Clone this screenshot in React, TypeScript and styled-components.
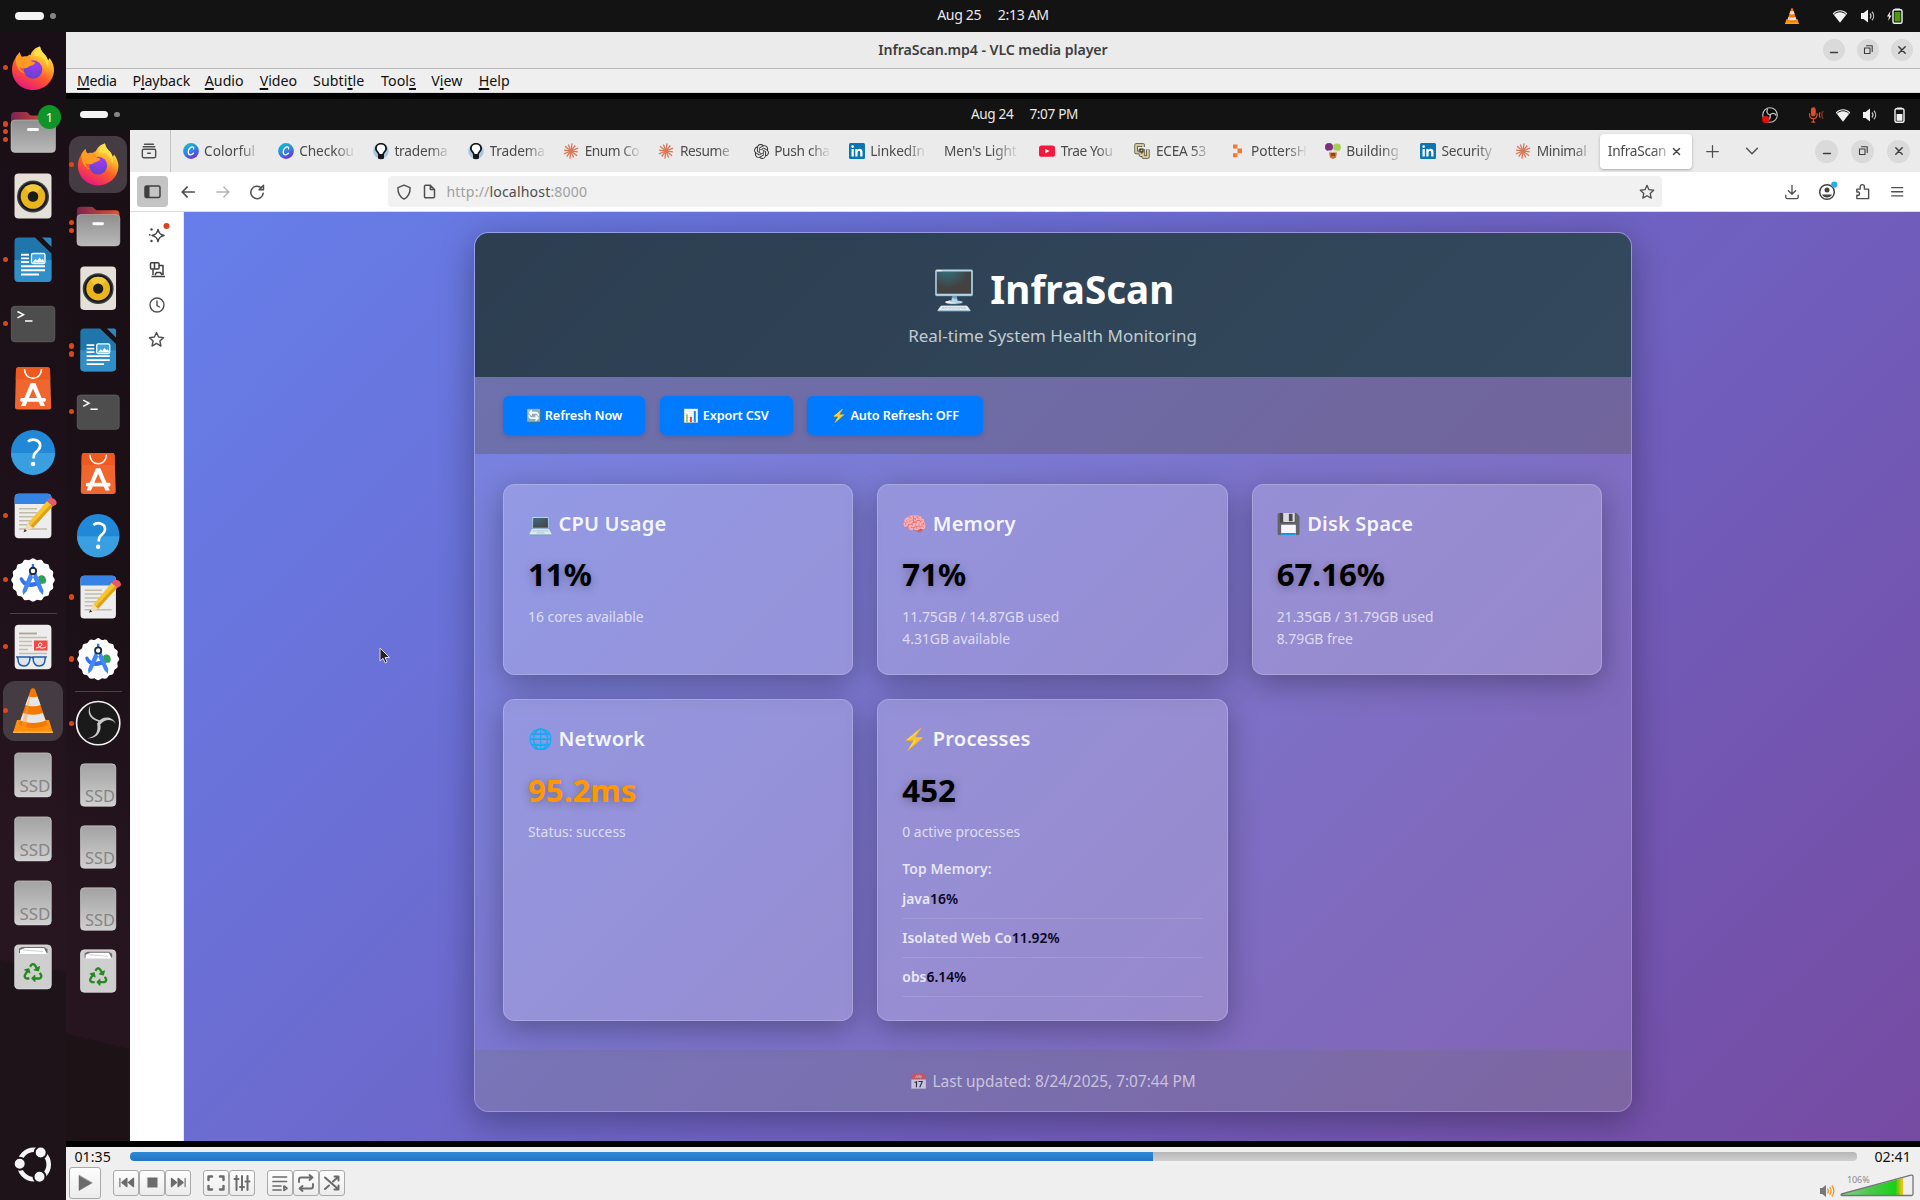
import React from "react";
import styled, { createGlobalStyle, css } from "styled-components";
import { SiOpenai } from "react-icons/si";
import { FaRecycle } from "react-icons/fa";

const UI = `"Noto Sans", "Open Sans", sans-serif`;

const Global = createGlobalStyle`
  *, *::before, *::after { box-sizing: border-box; }
  html, body { margin: 0; padding: 0; background: #000; }
  body { width: 1920px; height: 1200px; overflow: hidden; font-family: ${UI}; }
  svg { display: block; flex: none; overflow: visible; }
`;

/* ---------- desktop shell ---------- */

const Desktop = styled.div`
  width: 1920px;
  height: 1200px;
  display: grid;
  grid-template-rows: 32px 1168px;
  overflow: hidden;
`;

const TopBar = styled.header<{ $h: number; $left: number; $fs: number; $pad: number }>`
  height: ${(p) => p.$h}px;
  background: #131313;
  color: #e9e9e9;
  display: grid;
  grid-template-columns: 1fr auto 1fr;
  align-items: center;
  padding: 0 ${(p) => p.$pad}px 0 ${(p) => p.$left}px;
  font-size: ${(p) => p.$fs}px;
  letter-spacing: -0.35px;
`;

const Activities = styled.div<{ $s: number }>`
  display: flex;
  align-items: center;
  gap: ${(p) => 6 * p.$s}px;
  &::before {
    content: "";
    width: ${(p) => 29 * p.$s}px;
    height: ${(p) => 8 * p.$s}px;
    border-radius: 5px;
    background: #f4f4f4;
  }
  &::after {
    content: "";
    width: ${(p) => 6 * p.$s}px;
    height: ${(p) => 6 * p.$s}px;
    border-radius: 50%;
    background: #858585;
  }
`;

const Clock = styled.div<{ $shift: number; $gap: number }>`
  display: flex;
  gap: ${(p) => p.$gap}px;
  margin-right: ${(p) => p.$shift}px;
  padding-bottom: 2.4px;
  white-space: nowrap;
`;

const Tray = styled.div<{ $gap: number }>`
  display: flex;
  justify-content: flex-end;
  align-items: center;
  gap: ${(p) => p.$gap}px;
`;

const TrayGap = styled.span<{ $w: number }>`
  width: ${(p) => p.$w}px;
`;

const Below = styled.div`
  display: grid;
  grid-template-columns: 66px 1854px;
  min-height: 0;
`;

const Dock = styled.nav<{ $pad: number; $inner?: boolean }>`
  display: flex;
  flex-direction: column;
  align-items: center;
  padding-top: ${(p) => p.$pad}px;
  background: ${(p) =>
    p.$inner
      ? "linear-gradient(194deg, #1a0f15 0%, #1c1017 50%, #26151f 78%, #26151f 89.4%, #1d1216 89.6%)"
      : "linear-gradient(190deg, #1a0f16 0%, #1e1119 45%, #27151f 70%, #27151f 79.5%, #1e1318 79.8%)"};
`;

const DockItem = styled.div<{ $h: number; $active?: boolean }>`
  position: relative;
  height: ${(p) => p.$h}px;
  width: 100%;
  display: flex;
  align-items: center;
  justify-content: center;
  ${(p) =>
    p.$active &&
    css`
      &::before {
        content: "";
        position: absolute;
        inset: 2px 3px;
        border-radius: 12px;
        background: #453b42;
      }
    `}
  svg {
    position: relative;
  }
`;

const Dots = styled.div`
  position: absolute;
  z-index: 1;
  left: 3px;
  top: 0;
  bottom: 0;
  display: flex;
  flex-direction: column;
  justify-content: center;
  gap: 2.6px;
`;

const Dot = styled.i`
  width: 5.4px;
  height: 5.4px;
  border-radius: 50%;
  background: #d9481c;
`;

const DockRule = styled.hr`
  width: 47px;
  height: 1px;
  margin: 1px 0;
  border: 0;
  background: #4a4046;
`;

const DockEnd = styled.div`
  margin-top: auto;
  padding-bottom: 16px;
`;

const Badge = styled.span`
  position: absolute;
  z-index: 2;
  left: 38px;
  top: 5px;
  width: 23px;
  height: 24px;
  border-radius: 50%;
  background: #0f9428;
  color: #fff;
  font-size: 13px;
  line-height: 24px;
  text-align: center;
`;

/* ---------- player window ---------- */

const Player = styled.main`
  display: grid;
  grid-template-rows: 36px 25px 6px 1042px 6px 53px;
  background: #000;
  min-width: 0;
`;

const TitleBar = styled.div`
  display: grid;
  grid-template-columns: 1fr auto 1fr;
  align-items: center;
  background: #ebebeb;
  padding: 0 7px;
`;

const Title = styled.h1`
  margin: 0;
  padding-bottom: 1px;
  font-size: 14.2px;
  font-weight: 600;
  letter-spacing: -0.08px;
  color: #3d3d3d;
`;

const WinButtons = styled.div<{ $gap: number; $d: number }>`
  display: flex;
  justify-content: flex-end;
  align-items: center;
  gap: ${(p) => p.$gap}px;
  span {
    width: ${(p) => p.$d}px;
    height: ${(p) => p.$d}px;
    border-radius: 50%;
    background: #dadada;
    display: grid;
    place-items: center;
  }
`;

const MenuBar = styled.div`
  display: flex;
  gap: 15.4px;
  padding-left: 11px;
  border-top: 1px solid #b9b9b9;
  border-bottom: 1px solid #d8d8d8;
  background: #efefef;
  color: #111;
  font-size: 14.2px;
  line-height: 23px;
  white-space: nowrap;
`;

const MenuEntry = styled.span<{ $w: number; $ls: number }>`
  width: ${(p) => p.$w}px;
  letter-spacing: ${(p) => p.$ls}px;
  u {
    text-underline-offset: 2px;
    text-decoration-thickness: 2px;
    text-decoration-skip-ink: none;
  }
`;

const Controls = styled.footer`
  background: #efefef;
  display: grid;
  grid-template-rows: 18px 35px;
`;

const SeekRow = styled.div`
  display: grid;
  grid-template-columns: 64px 1727px 1fr;
  align-items: center;
  font-size: 14.2px;
  color: #111;
`;

const Time = styled.span<{ $pad: number }>`
  padding-left: ${(p) => p.$pad}px;
  padding-top: 2px;
  line-height: 16px;
  letter-spacing: 0;
`;

const Seek = styled.div`
  height: 9px;
  border-radius: 4px;
  background: linear-gradient(#b6b6b6, #d0d0d0);
  overflow: hidden;
`;

const SeekFill = styled.div`
  height: 100%;
  border-radius: 4px 0 0 4px;
  background: linear-gradient(#2f8ad8, #2476c6);
`;

const ButtonRow = styled.div`
  display: flex;
  align-items: center;
  padding-left: 3px;
`;

const ButtonGroup = styled.div`
  display: flex;
  margin-right: 12px;
`;

const PlayerButton = styled.button<{ $big?: boolean }>`
  width: ${(p) => (p.$big ? 32 : 26)}px;
  height: ${(p) => (p.$big ? 32 : 26)}px;
  padding: 0;
  border: 1px solid #a9a9a9;
  border-radius: 3px;
  background: linear-gradient(#fdfdfd, #ececec);
  display: grid;
  place-items: center;
`;

const Volume = styled.div`
  margin-left: auto;
  margin-right: 5px;
  display: flex;
  align-items: flex-end;
  gap: 5px;
  height: 30px;
`;

const Wedge = styled.div`
  position: relative;
  width: 75px;
  height: 26px;
  span {
    position: absolute;
    left: 7px;
    top: 2px;
    font-size: 9px;
    line-height: 12px;
    color: #8a8a8a;
    letter-spacing: -0.1px;
  }
`;

/* ---------- recorded desktop ---------- */

const Recording = styled.section`
  display: grid;
  grid-template-rows: 31px 1011px;
  min-width: 0;
  overflow: hidden;
  position: relative;
`;

const RecBelow = styled.div`
  display: grid;
  grid-template-columns: 64px 1790px;
  min-height: 0;
`;

const Browser = styled.div`
  display: grid;
  grid-template-rows: 42px 40px 929px;
  background: #fff;
  min-width: 0;
`;

const TabStrip = styled.div`
  display: flex;
  align-items: center;
  background: #ebebeb;
  color: #4b4b4b;
  font-size: 13.7px;
  padding-right: 10px;
`;

const Archive = styled.div`
  width: 41px;
  height: 42px;
  border-right: 1px solid #c2c2c2;
  display: grid;
  place-items: center;
  padding-right: 3px;
`;

const Tab = styled.div`
  width: 95.2px;
  padding-left: 11.5px;
  display: flex;
  align-items: center;
  gap: 5.5px;
`;

const TabLabel = styled.span<{ $ls: number; $wide?: boolean }>`
  width: ${(p) => (p.$wide ? 78 : 58)}px;
  padding-bottom: 1px;
  white-space: nowrap;
  letter-spacing: ${(p) => p.$ls}px;
  mask-image: linear-gradient(to right, #000 62%, transparent 98%);
`;

const ActiveTab = styled.div`
  width: 92px;
  height: 35px;
  margin-left: 1px;
  padding-left: 8px;
  border-radius: 4px;
  background: #fff;
  box-shadow: 0 1px 3px rgba(0, 0, 0, 0.28);
  display: flex;
  align-items: center;
  gap: 3px;
`;

const ActiveLabel = styled.span`
  width: 60px;
  padding-bottom: 1px;
  white-space: nowrap;
  letter-spacing: -0.3px;
  mask-image: linear-gradient(to right, #000 75%, rgba(0, 0, 0, 0.3) 100%);
`;

const StripIcons = styled.div`
  display: flex;
  align-items: center;
  gap: 25px;
  margin-left: 13px;
  margin-right: auto;
`;

const NavBar = styled.div`
  display: flex;
  align-items: center;
  background: #fff;
  border-bottom: 1px solid #dcdce6;
  padding: 0 15px 0 7px;
`;

const SidebarToggle = styled.div`
  width: 31px;
  height: 31px;
  border-radius: 4px;
  background: #c4c4c4;
  display: grid;
  place-items: center;
`;

const NavIcons = styled.div`
  display: flex;
  align-items: center;
  gap: 18.5px;
  margin-left: 12px;
`;

const UrlBar = styled.div`
  margin-left: 123px;
  width: 1274px;
  height: 31px;
  border-radius: 4px;
  background: #f1f1f1;
  display: flex;
  align-items: center;
  padding: 0 7px 0 7.5px;
`;

const UrlText = styled.span`
  margin-left: 10px;
  margin-right: auto;
  padding-bottom: 1px;
  font-size: 14.1px;
  letter-spacing: 0.16px;
  color: #a0a0a0;
  b {
    font-weight: 400;
    color: #4d4d4d;
  }
`;

const NavRight = styled.div`
  margin-left: auto;
  display: flex;
  align-items: center;
  gap: 18px;
`;

const Content = styled.div`
  display: grid;
  grid-template-columns: 54px 1736px;
  min-height: 0;
`;

const SideRail = styled.aside`
  background: #fff;
  border-right: 1px solid #e6e6ee;
  display: flex;
  flex-direction: column;
  align-items: center;
  gap: 17px;
  padding-top: 14px;
`;

/* ---------- InfraScan page ---------- */

const Page = styled.div`
  background: linear-gradient(135deg, #667eea 0%, #764ba2 100%);
  padding-top: 19.5px;
  color: #fff;
  overflow: hidden;
`;

const Panel = styled.div`
  width: 1158px;
  height: 880.5px;
  margin-left: 289.5px;
  border: 1px solid rgba(255, 255, 255, 0.22);
  border-radius: 14.5px;
  background: rgba(255, 255, 255, 0.1);
  box-shadow: 0 8px 34px rgba(0, 0, 0, 0.33);
  overflow: hidden;
  display: grid;
  grid-template-rows: 144.5px 77px 1fr 61px;
`;

const Hero = styled.header`
  background: linear-gradient(135deg, #2c3e50, #34495e);
  text-align: center;
  padding-top: 26.2px;
  h2 {
    margin: 0 0 0.6px;
    font-size: 38.6px;
    line-height: 61.8px;
    font-weight: 700;
  }
  p {
    margin: 0;
    font-size: 17px;
    line-height: 27px;
    color: #c2cbd1;
  }
`;

const Actions = styled.div`
  background: rgba(96, 88, 100, 0.42);
  display: flex;
  align-items: center;
  gap: 14.6px;
  padding-left: 28.6px;
`;

const Action = styled.button<{ $w: number }>`
  width: ${(p) => p.$w}px;
  height: 38.6px;
  padding: 0;
  border: 0;
  border-radius: 6px;
  background: #007bff;
  color: #fff;
  font: 600 12.7px/1 ${UI};
  letter-spacing: -0.12px;
  white-space: nowrap;
  box-shadow: 0 2px 5px rgba(0, 60, 160, 0.25);
`;

const Cards = styled.div`
  display: grid;
  grid-template-columns: repeat(3, 1fr);
  grid-template-rows: 191.2px 322.3px;
  gap: 24.2px;
  padding: 29.5px 28.6px 0;
`;

const Card = styled.article`
  border: 1px solid rgba(255, 255, 255, 0.2);
  border-radius: 11.6px;
  background: rgba(255, 255, 255, 0.2);
  box-shadow: 0 8px 31px rgba(0, 0, 0, 0.3);
  padding: 24.1px 23.9px;
`;

const CardTitle = styled.h3`
  margin: 0 0 11.6px;
  font-size: 20.1px;
  line-height: 29.1px;
  font-weight: 600;
  letter-spacing: 0.15px;
  color: rgba(255, 255, 255, 0.92);
`;

const Metric = styled.div<{ $c?: string }>`
  margin-bottom: 6.2px;
  font-size: 31.2px;
  line-height: 49.4px;
  font-weight: 700;
  color: ${(p) => p.$c ?? "#000"};
  text-shadow: 0 2px 10px rgba(0, 0, 0, 0.3);
`;

const Detail = styled.p`
  margin: 0;
  font-size: 13.9px;
  line-height: 22.2px;
  color: rgba(255, 255, 255, 0.7);
`;

const TopMemory = styled.p`
  margin: 14.5px 0 0;
  font-size: 13.9px;
  line-height: 22.2px;
  font-weight: 600;
  letter-spacing: 0.1px;
  color: rgba(255, 255, 255, 0.78);
`;

const Proc = styled.div`
  font-size: 13.9px;
  line-height: 22.9px;
  padding: 7.6px 0 7.4px;
  border-bottom: 1px solid rgba(255, 255, 255, 0.12);
  font-weight: 600;
  color: rgba(255, 255, 255, 0.82);
  b {
    font-weight: 600;
    color: #08041c;
  }
`;

const Updated = styled.footer`
  background: rgba(110, 110, 110, 0.25);
  text-align: center;
  padding-top: 20px;
  font-size: 15.4px;
  line-height: 24.6px;
  color: rgba(255, 255, 255, 0.6);
`;

const Emoji = styled.span<{ $gap?: number }>`
  font-family: "Noto Color Emoji", ${UI};
  margin-right: ${(p) => p.$gap ?? 0}px;
`;

const Pointer = styled.div`
  position: absolute;
  left: 313px;
  top: 548px;
`;

/* ---------- dock icons, 48 unit grid ---------- */

type P = { s: number };

const Svg48 = ({ s, children }: P & { children: React.ReactNode }) => (
  <svg width={48 * s} height={48 * s} viewBox="0 0 48 48">{children}</svg>
);

const Firefox = ({ s }: P) => (
  <Svg48 s={s}>
    <defs>
      <linearGradient id="ffx" x1=".8" y1="0" x2=".3" y2="1">
        <stop offset="0" stopColor="#fff44f" />
        <stop offset=".35" stopColor="#ffb02a" />
        <stop offset=".6" stopColor="#ff5a2c" />
        <stop offset="1" stopColor="#e8157f" />
      </linearGradient>
      <radialGradient id="ffg" cx=".6" cy=".2" r=".9">
        <stop offset="0" stopColor="#a33af0" />
        <stop offset="1" stopColor="#5a45c9" />
      </radialGradient>
    </defs>
    <path fill="url(#ffx)" d="M6 15c1-3 3-5 5-7 0 2 .6 3.400 1.800 4.800 1.500-.6 3.800-.8 5.200-.4 2-1 3.200-3 3.300-1C23 7 26 3.500 31 2.500c.5 4 3 6 5.500 9 1.500 1.800 2.200 3.600 2.500 5l1.600-2.600c3 4 4.700 8.600 4.400 13.100C44.300 38 35 46 24 46 12 46 3 37 3 25.500c0-4 1-7.500 3-10.500z" />
    <circle cx="24" cy="25.500" r="9.300" fill="url(#ffg)" />
    <path fill="#ff9a24" d="M7 13c1.500-1.400 3-3 4-4.500 0 2 .6 3.400 1.800 4.800 1.500-.6 3.800-.8 5.200-.4l3.300-2c0 3-.8 5 .7 6 2 1 4 .8 4 2-.3 1.500-3 2.600-5 3-1.500.3-2 1.600-3.500 2-3 1-5-.5-7-.4 1.500 3 3.500 5 6.500 6-6-.5-11-6-10-16.500z" />
    <path fill="#ffe04a" d="M25 12c.6-5 3.500-8.500 6-9.500.5 4 3 6 5.500 9 3 4 3.200 8 2.500 12-1-4-2.500-7-5.500-9.500-2-1.600-5-2-8.500-2z" />
  </Svg48>
);

const Files = ({ s }: P) => (
  <Svg48 s={s}>
    <defs>
      <linearGradient id="fback"><stop offset="0" stopColor="#7b2450" /><stop offset="1" stopColor="#e4572e" /></linearGradient>
      <linearGradient id="ffront" x1="0" y1="0" x2="0" y2="1"><stop offset="0" stopColor="#8f8f8f" /><stop offset="1" stopColor="#b9b9b9" /></linearGradient>
    </defs>
    <path fill="url(#fback)" d="M2 8a4 4 0 0 1 4-4h11c2.500 0 3 3.500 6 3.500h19a4 4 0 0 1 4 4V20H2z" />
    <rect x="2" y="12" width="44.500" height="32.500" rx="4" fill="url(#ffront)" stroke="#c8c8c8" strokeWidth=".5" />
    <rect x="18" y="20" width="12" height="3" rx="1.500" fill="#fff" />
  </Svg48>
);

const Speaker = ({ s }: P) => (
  <Svg48 s={s}>
    <rect x="5.500" y="1.500" width="37" height="45" rx="4" fill="#e6e1d8" />
    <circle cx="24" cy="24.500" r="16" fill="#3a3f45" />
    <circle cx="24" cy="24.500" r="14.500" fill="#17191c" />
    <circle cx="24" cy="24.500" r="12.300" fill="#e9b41c" />
    <path d="M24 24.500 15.500 15.700a12.300 12.300 0 0 1 17 0z" fill="#f5d24a" opacity=".7" />
    <circle cx="24" cy="24.500" r="5.300" fill="#1c1c1c" />
  </Svg48>
);

const Writer = ({ s }: P) => (
  <Svg48 s={s}>
    <path fill="#1f76ac" d="M9.500 1.500H26l16.500 16V42a4 4 0 0 1-4 4h-29a4 4 0 0 1-4-4V5.500a4 4 0 0 1 4-4z" />
    <path fill="#3798cf" d="M5.500 24H42.500V42a4 4 0 0 1-4 4h-29a4 4 0 0 1-4-4z" opacity=".75" />
    <path fill="#2d86bd" d="M33 1.500h7.500a2 2 0 0 1 2 2V11z" />
    <g fill="#fff">
      <path d="M12 17.800h8v1.900h-8zM12 21.400h8v1.900h-8zM12 25h8v1.900h-8zM12 29.300h24v1.900H12zM12 33.300h24v1.900H12zM12 37.500h18v1.900H12z" />
      <rect x="22.500" y="17.500" width="13.500" height="10" rx="1.500" fill="#3fa3dc" stroke="#fff" strokeWidth="1.300" />
      <path d="m23.500 26.500 3-3.500 2 1.500 2-3 2 2.500 1.500-1 1.500 3.500z" />
    </g>
  </Svg48>
);

const Terminal = ({ s }: P) => (
  <Svg48 s={s}>
    <rect x="2.300" y="6.300" width="43.500" height="35.500" rx="3.500" fill="#4d4d4d" stroke="#676767" strokeWidth=".7" />
    <path d="m8.500 11.500 6 3.200-6 3.200M16 21h7.500" fill="none" stroke="#fff" strokeWidth="1.500" />
  </Svg48>
);

const AppCenter = ({ s }: P) => (
  <Svg48 s={s}>
    <path fill="#f1662f" d="M9.500 3.200h29a2.500 2.500 0 0 1 2.500 2.300L42.200 43a2.500 2.500 0 0 1-2.500 2.500H8.500A2.500 2.500 0 0 1 6 43L7 5.500a2.500 2.500 0 0 1 2.500-2.300z" />
    <path fill="#ec5a20" d="M9.500 3.200h29a2.500 2.500 0 0 1 2.500 2.300l.3 10H6.700L7 5.500a2.500 2.500 0 0 1 2.500-2.300z" />
    <path d="M15.500 5c0 5.500 3.500 9.300 8.500 9.300S32.500 10.500 32.500 5" fill="none" stroke="#fff" strokeWidth="1.500" />
    <path fillRule="evenodd" fill="#fff" d="M21.700 19h4.600L36 42h-4.500L24 24.500 16.500 42H12z" />
    <rect x="11.300" y="34" width="25.400" height="3.700" rx="1.200" fill="#fff" />
  </Svg48>
);

const Help = ({ s }: P) => (
  <Svg48 s={s}>
    <circle cx="24" cy="24" r="22" fill="#2088d6" />
    <path d="M2 25h44a22 22 0 0 1-44 0z" fill="#3a9fe0" />
    <path d="M19 13.500c2-1.800 5-2.400 8-1.400 5 1.700 5.300 6.800 1.800 10.300-3 2.600-4.200 3.600-4.200 8.200" fill="none" stroke="#fff" strokeWidth="2.700" />
    <circle cx="24" cy="36" r="2.300" fill="#fff" />
  </Svg48>
);

const Editor = ({ s }: P) => (
  <Svg48 s={s}>
    <rect x="5.700" y="1.700" width="36.700" height="44.500" rx="4" fill="#ededed" />
    <path d="M5.700 12V5.700a4 4 0 0 1 4-4h28.700a4 4 0 0 1 4 4V12z" fill="#3584e4" />
    <path d="M10 16.800h18M10 20.800h18M10 24.800h16M10 28.800h12M10 32.800h8M10 37h28" stroke="#c4bcab" strokeWidth="1.600" />
    <path d="m19 31.500 19-22.500 5.500 5-19.500 22-8.500 3z" fill="#f7c52c" />
    <path d="m21.500 34 20-21.500 2 2-19.500 21.500z" fill="#dfa019" />
    <path d="m19 31.500 5 4.500-8.500 3.700z" fill="#efdcb8" />
    <path d="m14.500 40.200 1.300-3.200 2 1.900z" fill="#333" />
    <path d="m38 9 2-2.300c2-1.700 5.500-.5 7 2 .8 1.500.8 2.800 0 3.800l-3 2z" fill="#e8596a" />
  </Svg48>
);

const scallop = Array.from({ length: 97 }, (_, i) => {
  const a = (i / 96) * Math.PI * 2;
  const r = 21 + 0.8 * Math.cos(a * 16);
  return `${24 + r * Math.cos(a)},${24 + r * Math.sin(a)}`;
}).join(" ");

const Studio = ({ s }: P) => (
  <Svg48 s={s}>
    <polygon points={scallop} fill="#fff" />
    <path d="M29 21c2-2.500 5.500-2.500 7 0 1.500 2.300 1.300 4.500 0 6.500l-5 .5z" fill="#2fa24f" />
    <path d="M10.500 22.500c1-1.600 3-1.500 3.500 0 1.500 3 5 4.500 9 4l6-1.500 1.800 3.500c-8 4.500-18 3-20.300-6z" fill="#3573e8" />
    <path d="M21 16 13.500 34.500l.5 4.500 3.500-3.500L25.500 18zM27 16l7.500 18.500-.5 4.500-3.500-3.500L22.500 18z" fill="#4285f4" />
    <path d="M22.800 8h2.400v5h-2.400z" fill="#3573e8" />
    <circle cx="24" cy="15" r="3.200" fill="#fff" stroke="#1c2b33" strokeWidth="1.900" />
  </Svg48>
);

const DocViewer = ({ s }: P) => (
  <Svg48 s={s}>
    <rect x="5.700" y="1.700" width="36.700" height="44.500" rx="4" fill="#ededed" />
    <path d="M10 10.500h18" stroke="#b3a78f" strokeWidth="1.900" />
    <path d="M10 14.500h28M10 18.500h13M10 22.500h13M10 26.500h9M10 30.500h28" stroke="#c4bcab" strokeWidth="1.700" />
    <rect x="25" y="17.500" width="13.500" height="10" fill="#f04a44" />
    <path d="M27 25c4-.5 7-3 5.500-4.500s-4 .5-2.500 3 4.500 1.500 7 .5" fill="none" stroke="#fff" strokeWidth="1" />
    <g fill="rgba(190,215,240,.35)" stroke="#1f5ba8" strokeWidth="1.500">
      <path d="M8 34h13c0 5-1 9-6 9s-6-4-6-7zM24 34h13l-1 2c0 3-1 7-6 7s-6-4-6-9z" />
      <path d="M21 35c1-1 2-1 3 0" fill="none" />
    </g>
  </Svg48>
);

const Cone = ({ s }: P) => (
  <Svg48 s={s}>
    <path d="M8 33h32l4 13H4z" fill="#ff8f0c" />
    <path d="M4 44.500h40V46H4z" fill="#ffb347" />
    <path d="M22 2c.6-1 3.400-1 4 0l12 35c-3 5.500-25 5.500-28 0z" fill="#f57900" />
    <path d="M19.600 9.500c2.500 1 6.300 1 8.800 0l3.200 8.500c-4 1.800-11.200 1.800-15.200 0zM14.200 26c5 2.300 14.600 2.300 19.600 0l2.800 7.500c-6 3.300-19.200 3.300-25.200 0z" fill="#e6e6e6" />
    <path d="M22 2 13 36c-1.500 2 1 4 4 4.700z" fill="#ffa13d" opacity=".45" />
  </Svg48>
);

const Ssd = ({ s }: P) => (
  <Svg48 s={s}>
    <defs><linearGradient id="ssdg" x1="0" y1="0" x2="0" y2="1"><stop offset="0" stopColor="#a2a2a2" /><stop offset="1" stopColor="#d0d0d0" /></linearGradient></defs>
    <rect x="5.700" y="1.900" width="36.600" height="44" rx="4" fill="url(#ssdg)" stroke="#dcdcdc" strokeWidth=".6" />
    <text x="10.500" y="41" fontFamily={UI} fontSize="16" textLength="31" lengthAdjust="spacingAndGlyphs" fill="#858585">SSD</text>
  </Svg48>
);

const Trash = ({ s }: P) => (
  <Svg48 s={s}>
    <rect x="5.700" y="1.900" width="36.600" height="44" rx="4" fill="#cfcfcf" stroke="#e2e2e2" strokeWidth=".7" />
    <path d="M10 10V5.500L13 4h22l3.500 2V10z" fill="#6f6f6f" />
    <path d="M11 11V7l5-2h19l3 6z" fill="#fff" />
    <path d="m14 7 20 1.500" stroke="#bbb" strokeWidth=".7" />
    <FaRecycle x="14.500" y="20" size={19} color="#26891f" />
  </Svg48>
);

const Obs = ({ s }: P) => (
  <Svg48 s={s}>
    <circle cx="24" cy="24" r="22.400" fill="#1b1a1b" stroke="#f2f2f2" strokeWidth="1.700" />
    <g fill="#c9c9c9">
      <path d="M24.500 22.500c-9-2.500-13-9-8.500-17-2 8 1 13 9.500 15.500l1 4z" />
      <path d="M24 22.500c5-6 14-6.500 18.500 2-5.500-5.500-11-4.500-16 .5l-3 .5z" />
      <path d="M23 23.500l3 1c2.500 8-4 16-13 15 8-1.500 11.500-6 10-15z" />
    </g>
  </Svg48>
);

const UbuntuLogo = () => (
  <svg width="40" height="40" viewBox="0 0 40 40">
    <circle cx="21" cy="20.500" r="14.700" fill="none" stroke="#f5f5f5" strokeWidth="4.600" />
    <g fill="#f5f5f5" stroke="#1e1318" strokeWidth="2">
      <circle cx="27.700" cy="8.500" r="6" />
      <circle cx="6.700" cy="19.700" r="6" />
      <circle cx="26.500" cy="32.700" r="6" />
    </g>
  </svg>
);

/* ---------- symbolic icons ---------- */

const Wifi = () => (
  <svg width="16" height="16" viewBox="0 0 16 16">
    <path d="M.8 5.500C4.800 1.200 11.200 1.200 15.200 5.500L8 14.800z" fill="#f2f2f2" />
    <path d="M2.200 6.200C5.500 3 10.500 3 13.800 6.200" stroke="#131313" strokeWidth="1" fill="none" />
  </svg>
);

const Sound = () => (
  <svg width="16" height="16" viewBox="0 0 16 16">
    <path d="M1 5h2.500L8 1.500v13L3.500 11H1z" fill="#f2f2f2" />
    <path d="M10 5.500c1.200 1.500 1.200 3.500 0 5M12 3.800c2.200 2.400 2.200 6 0 8.400" stroke="#bdbdbd" strokeWidth="1.300" fill="none" />
  </svg>
);

const Battery = ({ charging }: { charging?: boolean }) => (
  <svg width="16" height="18" viewBox="0 0 16 18">
    {charging && <path d="M3.500 4 0 9.500h2L1.200 14 4.500 8.500h-2z" fill="#f2f2f2" />}
    <path d="M8 1.500h5v1.700H8z" fill="#f2f2f2" />
    <rect x="6" y="2.800" width="9" height="13.400" rx="1.500" fill="none" stroke="#f2f2f2" strokeWidth="1.400" />
    <rect x="7.600" y={charging ? 5 : 8} width="5.800" height={charging ? 9.500 : 6.800} fill={charging ? "#4e9a06" : "#f2f2f2"} />
  </svg>
);

const Mic = () => (
  <svg width="16" height="18" viewBox="0 0 18 18">
    <g stroke="#dd4f27" fill="none" strokeWidth="1.400">
      <rect x="4" y="1" width="4" height="9" rx="2" fill="#dd4f27" />
      <path d="M1.800 7v2c0 5.300 8.400 5.300 8.400 0V7M6 13v4M3.800 17h4.400M13.500 6c-1 2-1 4 0 6" />
      <path d="M17 4.500c-2 3-2 6 0 9" opacity=".6" />
    </g>
  </svg>
);

const ObsTray = () => (
  <svg width="16" height="18" viewBox="0 0 16 18">
    <circle cx="8" cy="9" r="7.300" fill="#0b0b0b" stroke="#c4c4c4" strokeWidth="1.100" />
    <g fill="none" stroke="#c4c4c4" strokeWidth="1.300" strokeLinecap="round">
      <path d="M8 9C5 8 4.300 5.500 5.500 3.500M8 9c2-2.200 4.500-2 6 0M8 9c.8 2.500-.5 5-3 5.300" />
    </g>
    <circle cx="3.800" cy="13.500" r="3.600" fill="#e80c0c" />
  </svg>
);

const Line = ({ d, w = 18, sw = 1.5, c = "#4f4f4f", fill = "none" }: { d: string; w?: number; sw?: number; c?: string; fill?: string }) => (
  <svg width={w} height={w} viewBox="0 0 18 18" fill={fill} stroke={c} strokeWidth={sw} strokeLinejoin="round" strokeLinecap="round">
    <path d={d} />
  </svg>
);

const WinIcons = ({ gap, d }: { gap: number; d: number }) => (
  <WinButtons $gap={gap} $d={d}>
    <span><Line d="M5.500 11.500h7" sw={1.300} c="#3d3d3d" /></span>
    <span><Line d="M5.500 7h5.500v5.500H5.500zM7.500 4.800h5.700v5.700" sw={1.100} c="#3d3d3d" /></span>
    <span><Line d="m5.800 5.800 6.400 6.400m0-6.400-6.400 6.400" sw={1.500} c="#3d3d3d" /></span>
  </WinButtons>
);

const starD = "M9 1.500l2.200 4.900 5.300.6-3.900 3.600 1.100 5.300L9 13.200l-4.700 2.700 1.100-5.300L1.500 7l5.300-.6z";

/* ---------- favicons ---------- */

const Fav = ({ children }: { children: React.ReactNode }) => (
  <svg width="16" height="16" viewBox="0 0 16 16">{children}</svg>
);

const Canva = () => (
  <Fav>
    <defs><linearGradient id="cnv" x1=".2" y1="0" x2=".7" y2="1"><stop offset="0" stopColor="#12c0cc" /><stop offset=".5" stopColor="#2f86dd" /><stop offset="1" stopColor="#6f2be0" /></linearGradient></defs>
    <circle cx="8" cy="8" r="7.900" fill="url(#cnv)" />
    <path d="M10.500 6c.6-1.300-.2-2.400-1.600-2.100C6.500 4.400 5 7.500 5.200 9.600c.3 2.600 3 3 5.300.6" fill="none" stroke="#fff" strokeWidth="1.300" strokeLinecap="round" />
  </Fav>
);

const Bulb = () => (
  <Fav>
    <circle cx="8" cy="8" r="7.800" fill="#a5c9e4" />
    <path d="M8 0c4 0 6 2.500 6 5.500S11 9.500 11 12v3.500c-1.500 1-4.500 1-6 0V12C5 9.500 2 8.500 2 5.500S4 0 8 0z" fill="#16181b" />
    <path d="M8 1.600c2.700 0 4.200 1.700 4.200 3.800S9.800 8.500 9.300 11H6.700C6.200 8.500 3.800 7.500 3.800 5.400S5.300 1.600 8 1.600z" fill="#fff" />
  </Fav>
);

const Burst = () => (
  <Fav>
    {Array.from({ length: 12 }, (_, i) => (
      <path key={i} d={`M8 8V${i % 2 ? 1 : 0.3}`} transform={`rotate(${i * 30 + 8} 8 8)`} stroke="#d97757" strokeWidth="1.300" />
    ))}
  </Fav>
);

const LinkedIn = () => (
  <Fav>
    <rect x="0" y="0" width="16" height="16" rx="1.500" fill="#0a76b4" />
    <path d="M2.500 6h2.300v7.500H2.500zM6.300 6h2.200v1c1.200-1.900 5-1.700 5 1.800v4.700h-2.300V9.500c0-2-2.600-1.900-2.600 0v4H6.300z" fill="#fff" />
    <circle cx="3.650" cy="3.600" r="1.300" fill="#fff" />
  </Fav>
);

const YouTube = () => (
  <Fav>
    <rect x="0" y="2.400" width="16" height="11.400" rx="2.600" fill="#f8173c" />
    <path d="M6.300 5.700v4.800l4.200-2.400z" fill="#fff" />
  </Fav>
);

const Buffs = () => (
  <Fav>
    <g fill="none" strokeLinejoin="round">
      <path d="M9 4V2H2.200v7.500H6M6.500 6v6H9.500M9.300 6v8h4.500V6.500" stroke="#4a4330" strokeWidth="3.600" />
      <path d="M9 4V2H2.200v7.500H6M6.500 6v6H9.500M9.300 6v8h4.500V6.500" stroke="#d2c8a0" strokeWidth="2.200" />
    </g>
    <path d="M5.500 5.500h4v4h-4z" fill="#1b1b1b" />
    <path d="M6.500 6.500h2v2h-2z" fill="#cfb87c" />
  </Fav>
);

const Pixels = () => (
  <Fav>
    <path d="M3 1.500h4.500v4H3zM7.500 5.500h4.500v4.800H7.500zM3 10.300h4.500v4H3z" fill="#f37a33" />
  </Fav>
);

const Sprout = () => (
  <Fav>
    <circle cx="4" cy="4" r="4" fill="#7b2f7e" />
    <circle cx="12" cy="4.300" r="3.900" fill="#a6cf57" />
    <path d="M2.500 7.500h11l-2 2h-7z" fill="#e8e0e6" />
    <path d="M4 9.500h8l-1 5-3 1.500-3-1.500z" fill="#c8742f" />
    <path d="M6 10h4v3H6z" fill="#8c4a1e" />
  </Fav>
);

const Knot = () => <SiOpenai size={15} color="#333" />;

const tabs: { icon?: React.ReactNode; label: string; ls: number }[] = [
  { icon: <Canva />, label: "Colorful", ls: 0 },
  { icon: <Canva />, label: "Checkou", ls: -0.1 },
  { icon: <Bulb />, label: "tradema", ls: -0.2 },
  { icon: <Bulb />, label: "Tradema", ls: -0.2 },
  { icon: <Burst />, label: "Enum Co", ls: -0.5 },
  { icon: <Burst />, label: "Resume", ls: -0.4 },
  { icon: <Knot />, label: "Push cha", ls: -0.3 },
  { icon: <LinkedIn />, label: "LinkedIn", ls: -0.15 },
  { label: "Men's Light", ls: -0.1 },
  { icon: <YouTube />, label: "Trae You", ls: -0.4 },
  { icon: <Buffs />, label: "ECEA 53", ls: -0.25 },
  { icon: <Pixels />, label: "PottersH", ls: -0.1 },
  { icon: <Sprout />, label: "Building", ls: -0.1 },
  { icon: <LinkedIn />, label: "Security", ls: -0.15 },
  { icon: <Burst />, label: "Minimal", ls: -0.3 },
];

type Entry = { icon: React.FC<P>; dots?: number; active?: boolean; badge?: string };

const outerDock: (Entry | null)[] = [
  { icon: Firefox, dots: 1 },
  { icon: Files, dots: 3, badge: "1" },
  { icon: Speaker },
  { icon: Writer, dots: 1 },
  { icon: Terminal, dots: 1 },
  { icon: AppCenter },
  { icon: Help },
  { icon: Editor, dots: 1 },
  { icon: Studio, dots: 1 },
  null,
  { icon: DocViewer, dots: 1 },
  { icon: Cone, dots: 1, active: true },
  { icon: Ssd },
  { icon: Ssd },
  { icon: Ssd },
  { icon: Trash },
];

const innerDock: (Entry | null)[] = [
  { icon: Firefox, dots: 1, active: true },
  { icon: Files, dots: 2 },
  { icon: Speaker },
  { icon: Writer, dots: 2 },
  { icon: Terminal, dots: 1 },
  { icon: AppCenter },
  { icon: Help },
  { icon: Editor, dots: 1 },
  { icon: Studio, dots: 1 },
  null,
  { icon: Obs, dots: 1 },
  { icon: Ssd },
  { icon: Ssd },
  { icon: Ssd },
  { icon: Trash },
];

const DockList = ({ items, h, s }: { items: (Entry | null)[]; h: number; s: number }) => (
  <>
    {items.map((it, i) =>
      it === null ? (
        <DockRule key={i} />
      ) : (
        <DockItem key={i} $h={h} $active={it.active}>
          {it.dots && <Dots>{Array.from({ length: it.dots }, (_, n) => <Dot key={n} />)}</Dots>}
          <it.icon s={s} />
          {it.badge && <Badge>{it.badge}</Badge>}
        </DockItem>
      )
    )}
  </>
);

const menus: [string, string, string, number, number][] = [
  ["", "M", "edia", 40, -0.3],
  ["P", "l", "ayback", 57, -0.1],
  ["", "A", "udio", 39.5, 0],
  ["", "V", "ideo", 38, 0],
  ["Subti", "t", "le", 52.5, 0.05],
  ["Tool", "s", "", 35, 0.1],
  ["V", "i", "ew", 32, 0],
  ["", "H", "elp", 32, 0],
];

const G = "#6b6b6b";

const playerGroups: { big?: boolean; icons: React.ReactNode[] }[] = [
  { big: true, icons: [<Line key="p" w={18} d="M3 1.500v15L16 9z" c={G} fill={G} sw={0.5} />] },
  {
    icons: [
      <Line key="a" w={17} d="M2 4.500v9M9.500 4.500 4 9l5.500 4.500zM16.500 4.500 11 9l5.500 4.500z" c={G} fill={G} sw={1.200} />,
      <Line key="b" w={17} d="M4 4h10v10H4z" c={G} fill={G} sw={0.5} />,
      <Line key="c" w={17} d="M16 4.500v9M8.500 4.500 14 9l-5.500 4.500zM1.500 4.500 7 9l-5.500 4.500z" c={G} fill={G} sw={1.200} />,
    ],
  },
  {
    icons: [
      <Line key="a" w={18} d="M1.500 6V2.500H5M13 2.500h3.500V6M16.500 12v3.500H13M5 15.500H1.500V12" c={G} sw={2.400} />,
      <Line key="b" w={18} d="M3.500 2v14M9 2v14M14.500 2v14M1.500 5h4M7 13h4M12.500 7.500h4" c={G} sw={2} />,
    ],
  },
  {
    icons: [
      <Line key="a" w={18} d="M2 3h13.500M2 7.500h13.500M2 12h8M2 16h8M13 12l3 2.200-3 2.200z" c={G} sw={1.700} />,
      <Line key="b" w={18} d="M2 8V5.500C2 4 3 3.500 4 3.500h10M12.500 1l3 2.500-3 2.500M16 10v2.500c0 1.500-1 2-2 2H4M5.500 12l-3 2.500 3 2.500" c={G} sw={1.900} />,
      <Line key="c" w={18} d="M2 3.500 15 15M2 15l4-3.500M10 7.500l5-4.500M11.500 2.500h4v4M11.500 15.500h4v-4" c={G} sw={2} />,
    ],
  },
];

export default function App() {
  return (
    <>
      <Global />
      <Desktop>
        <TopBar $h={32} $left={15} $fs={14.1} $pad={17}>
          <Activities $s={1} />
          <Clock $shift={-68} $gap={16.5}><span>Aug 25</span><span>2:13 AM</span></Clock>
          <Tray $gap={11.5}>
            <svg width="14" height="16" viewBox="4 1 40 45"><Cone s={1} /></svg>
            <TrayGap $w={10} />
            <Wifi /><Sound /><Battery charging />
          </Tray>
        </TopBar>
        <Below>
          <Dock $pad={3.8}>
            <DockList items={outerDock} h={64} s={1} />
            <DockEnd><UbuntuLogo /></DockEnd>
          </Dock>
          <Player>
            <TitleBar>
              <span />
              <Title>InfraScan.mp4 - VLC media player</Title>
              <WinIcons gap={12} d={22} />
            </TitleBar>
            <MenuBar>
              {menus.map(([a, u, b, w, ls]) => (
                <MenuEntry key={a + u + b} $w={w} $ls={ls}>{a}<u>{u}</u>{b}</MenuEntry>
              ))}
            </MenuBar>
            <span />
            <Recording>
              <TopBar $h={31} $left={14} $fs={13.6} $pad={15}>
                <Activities $s={0.97} />
                <Clock $shift={-64} $gap={16}><span>Aug 24</span><span>7:07 PM</span></Clock>
                <Tray $gap={11}>
                  <ObsTray />
                  <TrayGap $w={8} />
                  <Mic /><Wifi /><Sound /><Battery />
                </Tray>
              </TopBar>
              <RecBelow>
                <Dock $pad={3.6} $inner>
                  <DockList items={innerDock} h={61.8} s={0.9656} />
                </Dock>
                <Browser>
                  <TabStrip>
                    <Archive><Line d="M4 1.500h10M2.500 4.200h13M1.500 8.500c0-1 .5-1.500 1.500-1.500h12c1 0 1.500.5 1.500 1.500V15c0 1-.5 1.500-1.500 1.500H3c-1 0-1.500-.5-1.500-1.500zM7.500 11.500h3" w={16} sw={1.600} /></Archive>
                    {tabs.map((t) => (
                      <Tab key={t.label}>
                        {t.icon}
                        <TabLabel $ls={t.ls} $wide={!t.icon}>{t.label}</TabLabel>
                      </Tab>
                    ))}
                    <ActiveTab>
                      <ActiveLabel>InfraScan</ActiveLabel>
                      <Line d="m4 4 10 10M14 4 4 14" w={11} sw={2.300} c="#444" />
                    </ActiveTab>
                    <StripIcons>
                      <Line d="M9 2v14M2 9h14" w={15} />
                      <Line d="m2 5.500 7 7 7-7" w={14} sw={1.800} />
                    </StripIcons>
                    <WinIcons gap={13} d={23} />
                  </TabStrip>
                  <NavBar>
                    <SidebarToggle>
                      <svg width="17" height="14" viewBox="0 0 17 14">
                        <rect x="1" y="1" width="15" height="11.500" rx="1.500" fill="none" stroke="#3f3f3f" strokeWidth="1.500" />
                        <path d="M1 1h4.500v11.500H1z" fill="#3f3f3f" />
                      </svg>
                    </SidebarToggle>
                    <NavIcons>
                      <Line d="M16 9H2.500M8 3.500 2.500 9 8 14.500" w={16} sw={1.900} />
                      <Line d="M2 9h13.500M10 3.500 15.500 9 10 14.500" w={16} sw={1.600} c="#b4b4b4" />
                      <Line d="M16 10.500A7 7 0 1 1 14 4.500M16.300 1.500v5h-5z" w={16} sw={1.700} />
                    </NavIcons>
                    <UrlBar>
                      <Line d="M9 1.200 15.800 4c.3 6-1.800 10.500-6.800 13C4 14.500 1.900 10 2.200 4z" w={16} sw={1.600} />
                      <TrayGap $w={10} />
                      <Line d="M4 1.500h6l5 5v8.500c0 1-.5 1.500-1.500 1.500h-9c-1 0-1.500-.5-1.500-1.500V3c0-1 .5-1.500 1.500-1.500M10 1.500v5h5" w={15} sw={1.800} />
                      <UrlText>http://<b>localhost</b>:8000</UrlText>
                      <Line d={starD} w={16} />
                    </UrlBar>
                    <NavRight>
                      <Line d="M9 1.500v9.500M5 7.500 9 11.500l4-4M2 12.500v2c0 1.300.6 2 2 2h10c1.400 0 2-.7 2-2v-2" w={16} sw={1.500} />
                      <svg width="18" height="18" viewBox="0 0 18 18">
                        <circle cx="9" cy="9" r="7.300" fill="none" stroke="#444" strokeWidth="1.500" />
                        <circle cx="9" cy="7" r="2.500" fill="#444" />
                        <path d="M4 11.500h10c-1.500 4-8.500 4-10 0z" fill="#444" />
                        <circle cx="16.300" cy="1.600" r="3.100" fill="#27aee8" />
                      </svg>
                      <Line d="M3 6.500h3.500V4a2.200 2.200 0 0 1 4.500 0v2.500h4.500V16.500H3v-3.500h1.700a1.900 1.900 0 0 0 0-3.500H3z" w={17} sw={1.500} />
                      <Line d="M3 4h12.500M3 8.700h12.500M3 13.400h12.500" w={16} sw={1.500} />
                    </NavRight>
                  </NavBar>
                  <Content>
                    <SideRail>
                      <svg width="18" height="18" viewBox="0 0 18 18">
                        <path d="M10 3.500c.8 3.700 2 5 6 6-4 1-5.200 2.300-6 6-.8-3.700-2-5-6-6 4-1 5.200-2.300 6-6z" fill="none" stroke="#444" strokeWidth="1.500" strokeLinejoin="round" />
                        <g fill="#444"><circle cx="3.500" cy="3.500" r="1.200" /><circle cx="1.800" cy="8.800" r=".9" /><circle cx="3.500" cy="15" r="1.200" /></g>
                        <circle cx="18.500" cy="0" r="3" fill="#d9431f" />
                      </svg>
                      <svg width="18" height="18" viewBox="0 0 18 18" fill="none" stroke="#3f3f3f" strokeWidth="1.500" strokeLinejoin="round">
                        <rect x="2.500" y="1.800" width="8.500" height="6.200" rx="1" />
                        <path d="M6.500 2v6M11 4.500h4v9.500M5 8.500V14M3.500 15.500h13.500M7 14l1.500-2.500h4L14 14" />
                      </svg>
                      <svg width="18" height="18" viewBox="0 0 18 18" fill="none" stroke="#4f4f4f" strokeWidth="1.400" strokeLinecap="round">
                        <circle cx="9" cy="9" r="7" />
                        <path d="M9 5v4.500l2.500 1.500" />
                      </svg>
                      <Line d={starD} w={17} />
                    </SideRail>
                    <Page>
                      <Panel>
                        <Hero>
                          <h2><Emoji $gap={1.5}>🖥️</Emoji> InfraScan</h2>
                          <p>Real-time System Health Monitoring</p>
                        </Hero>
                        <Actions>
                          <Action $w={142}><Emoji>🔄</Emoji> Refresh Now</Action>
                          <Action $w={133}><Emoji>📊</Emoji> Export CSV</Action>
                          <Action $w={176}><Emoji>⚡</Emoji> Auto Refresh: OFF</Action>
                        </Actions>
                        <Cards>
                          <Card>
                            <CardTitle><Emoji>💻</Emoji> CPU Usage</CardTitle>
                            <Metric>11%</Metric>
                            <Detail>16 cores available</Detail>
                          </Card>
                          <Card>
                            <CardTitle><Emoji>🧠</Emoji> Memory</CardTitle>
                            <Metric>71%</Metric>
                            <Detail>11.75GB / 14.87GB used<br />4.31GB available</Detail>
                          </Card>
                          <Card>
                            <CardTitle><Emoji>💾</Emoji> Disk Space</CardTitle>
                            <Metric>67.16%</Metric>
                            <Detail>21.35GB / 31.79GB used<br />8.79GB free</Detail>
                          </Card>
                          <Card>
                            <CardTitle><Emoji>🌐</Emoji> Network</CardTitle>
                            <Metric $c="#ff9800">95.2ms</Metric>
                            <Detail>Status: success</Detail>
                          </Card>
                          <Card>
                            <CardTitle><Emoji>⚡</Emoji> Processes</CardTitle>
                            <Metric>452</Metric>
                            <Detail>0 active processes</Detail>
                            <TopMemory>Top Memory:</TopMemory>
                            <Proc>java<b>16%</b></Proc>
                            <Proc>Isolated Web Co<b>11.92%</b></Proc>
                            <Proc>obs<b>6.14%</b></Proc>
                          </Card>
                        </Cards>
                        <Updated><Emoji>📅</Emoji> Last updated: 8/24/2025, 7:07:44 PM</Updated>
                      </Panel>
                    </Page>
                  </Content>
                </Browser>
              </RecBelow>
              <Pointer>
                <svg width="12" height="18" viewBox="0 0 12 18">
                  <path d="M1 1v13l3-2.700 2.200 4.700 2-1L6 10.500h4.500z" fill="#222" stroke="#d8d8e8" strokeWidth="1" />
                </svg>
              </Pointer>
            </Recording>
            <span />
            <Controls>
              <SeekRow>
                <Time $pad={8.5}>01:35</Time>
                <Seek><SeekFill style={{ width: `${(1023 / 1727) * 100}%` }} /></Seek>
                <Time $pad={17.5}>02:41</Time>
              </SeekRow>
              <ButtonRow>
                {playerGroups.map((g, i) => (
                  <ButtonGroup key={i}>
                    {g.icons.map((ic, n) => <PlayerButton key={n} $big={g.big}>{ic}</PlayerButton>)}
                  </ButtonGroup>
                ))}
                <Volume>
                  <svg width="15" height="14" viewBox="0 0 15 14">
                    <path d="M0 4h2.200L6 1v12L2.200 10H0z" fill="#777" />
                    <path d="M7.500 4.500c1 1.500 1 3.500 0 5M9.700 3c1.700 2.500 1.700 5.500 0 8M11.900 1.500c2.500 3.500 2.500 7.500 0 11" fill="none" stroke="#f5941f" strokeWidth="1.300" />
                  </svg>
                  <Wedge>
                    <svg width="75" height="26" viewBox="0 0 75 26">
                      <defs><linearGradient id="vol" gradientUnits="userSpaceOnUse" x1="0" y1="0" x2="63" y2="0"><stop offset="0" stopColor="#86d486" /><stop offset=".5" stopColor="#47c94a" /><stop offset=".88" stopColor="#17d117" /><stop offset=".97" stopColor="#e0c010" /><stop offset="1" stopColor="#f0c814" /></linearGradient></defs>
                      <path d="M1 22.500 63 6v17.500H1z" fill="url(#vol)" />
                      <path d="M1.500 22 71 3.200c1.200-.3 2 .3 2 1.300V22c0 1-.5 1.500-1.500 1.500H2c-1.200 0-1.500-1.200-.5-1.500z" fill="none" stroke="#757575" strokeWidth="1.300" />
                    </svg>
                    <span>106%</span>
                  </Wedge>
                </Volume>
              </ButtonRow>
            </Controls>
          </Player>
        </Below>
      </Desktop>
    </>
  );
}
